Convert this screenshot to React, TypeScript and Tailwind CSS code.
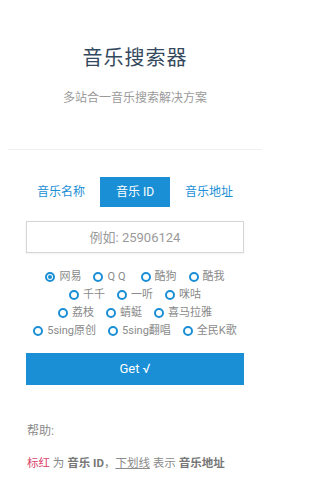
import { useState } from "react";

const rows: string[][] = [
  ["网易", "QQ", "酷狗", "酷我"],
  ["千千", "一听", "咪咕"],
  ["荔枝", "蜻蜓", "喜马拉雅"],
  ["5sing原创", "5sing翻唱", "全民K歌"],
];

const tabs = ["音乐名称", "音乐 ID", "音乐地址"];

function Radio({
  label,
  checked,
  onSelect,
}: {
  label: string;
  checked: boolean;
  onSelect: () => void;
}) {
  return (
    <label
      onClick={onSelect}
      className="flex items-center gap-[4px] h-[18px] cursor-pointer"
    >
      <span className="w-[10px] h-[10px] rounded-full border-2 border-[#1a8fd5] flex items-center justify-center">
        {checked && <span className="w-[4px] h-[4px] rounded-full bg-[#1a8fd5]" />}
      </span>
      <span
        className={
          "text-[11px] text-[#8a8a8a] leading-[18px]" +
          (label === "QQ" ? " tracking-[3px]" : "")
        }
      >
        {label}
      </span>
    </label>
  );
}

export default function App() {
  const [tab, setTab] = useState(1);
  const [source, setSource] = useState("网易");

  return (
    <div
      className="w-[270px] h-[480px] bg-white overflow-hidden"
      style={{ fontFamily: "Roboto, 'Noto Sans CJK SC', sans-serif" }}
    >
      <div className="pt-[44px] flex flex-col items-center">
        <h1 className="text-[20px] leading-[28px] text-[#34495e] tracking-[1px]">
          音乐搜索器
        </h1>
        <p className="mt-[18px] text-[12px] leading-[16px] text-[#9a9a9a]">
          多站合一音乐搜索解决方案
        </p>
      </div>

      <div className="mx-2 mt-[43px] h-px bg-[#efefef]" />

      <div className="px-[26px]">
        <div className="mt-[27px] flex gap-1">
          {tabs.map((t, i) => (
            <button
              key={t}
              onClick={() => setTab(i)}
              className={
                "flex-1 h-[30px] text-[12px] " +
                (tab === i ? "bg-[#1a8fd5] text-white" : "text-[#1a8fd5]")
              }
            >
              {t}
            </button>
          ))}
        </div>

        <input
          className="mt-[14px] w-full h-[32px] border border-[#d6d6d6] shadow-[0_1px_2px_rgba(0,0,0,0.06)] text-center text-[13px] text-[#555] placeholder:text-[#9a9a9a] outline-none"
          placeholder="例如: 25906124"
        />

        <div className="mt-[15px] flex flex-col items-center">
          {rows.map((row, i) => (
            <div key={i} className="flex gap-[12px]">
              {row.map((s) => (
                <Radio
                  key={s}
                  label={s}
                  checked={source === s}
                  onSelect={() => setSource(s)}
                />
              ))}
            </div>
          ))}
        </div>

        <button className="mt-[13px] w-full h-[32px] bg-[#1a8fd5] text-white text-[13px]">
          Get √
        </button>
      </div>

      <div className="px-[27px] text-[12px] leading-[16px] text-[#8a8a8a]">
        <p className="mt-[38px]">帮助:</p>
        <p className="mt-[16px] text-[11.5px]">
          <span className="text-[#d9436a]">标红</span> 为{" "}
          <b className="text-[#777]">音乐 ID</b>，
          <span className="underline">下划线</span> 表示{" "}
          <b className="text-[#777]">音乐地址</b>
        </p>
      </div>
    </div>
  );
}
